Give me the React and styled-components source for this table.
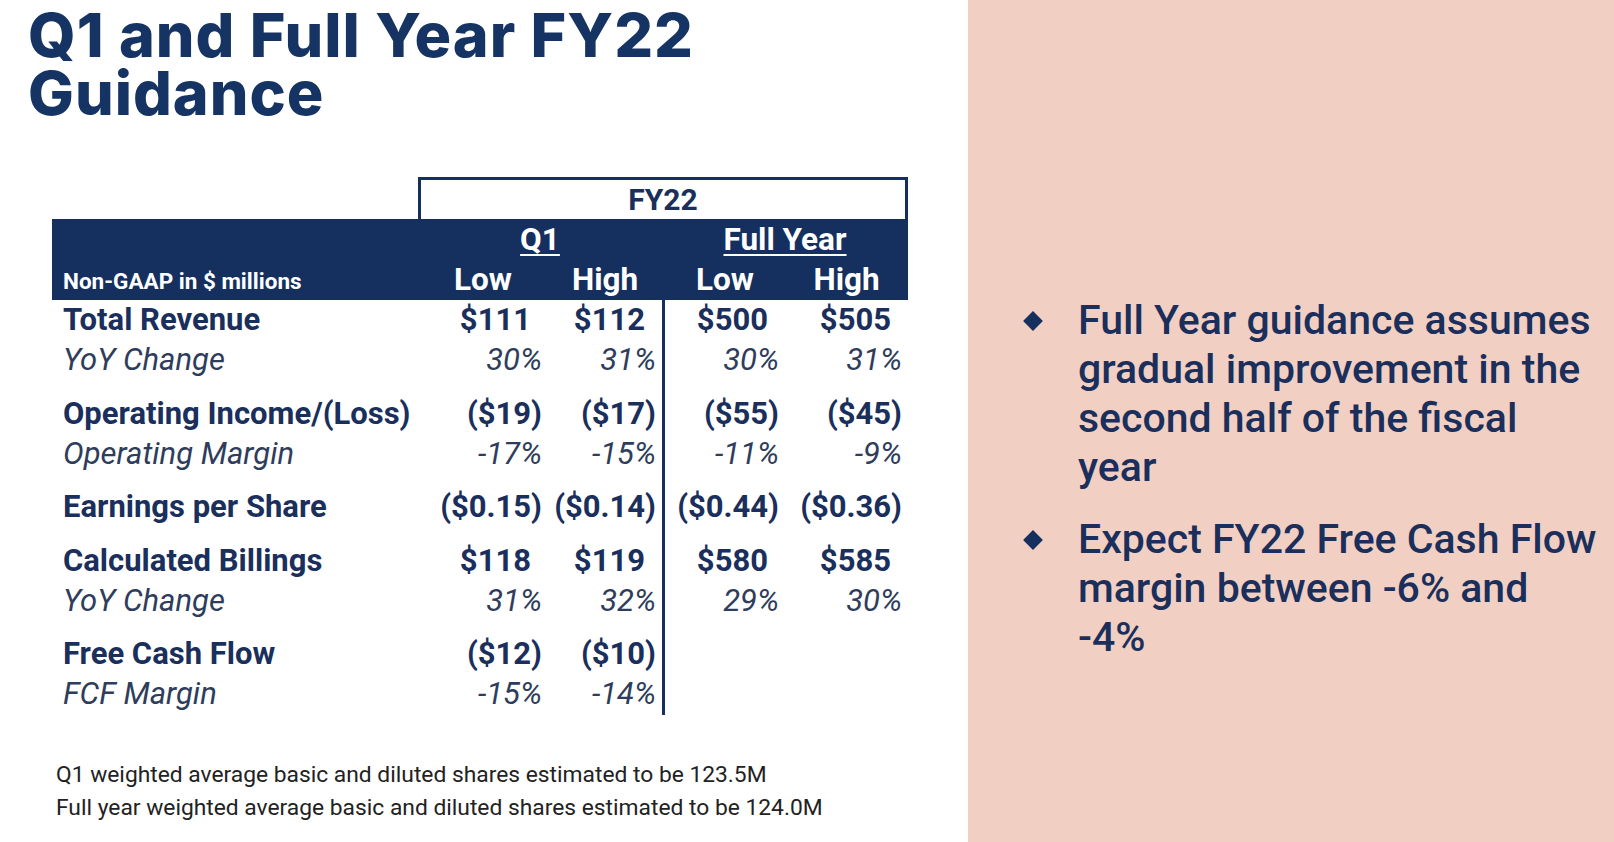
import React from "react";
import styled, { createGlobalStyle } from "styled-components";

const NAVY = "#15305e";
const INK = "#1a2f5b";
const SUB = "#2f3d5c";
const PINK = "#f2cfc3";
const COLS = "366px 130px 114px 3px 120px 123px";

const GlobalStyle = createGlobalStyle`
  html, body {
    margin: 0;
    padding: 0;
    background: #fff;
  }
  body {
    font-family: Roboto, "Liberation Sans", sans-serif;
  }
`;

const Page = styled.div`
  display: grid;
  grid-template-columns: 968px 1fr;
  width: 1614px;
  height: 842px;
  overflow: hidden;
`;

const LeftPane = styled.section`
  display: flex;
  flex-direction: column;
`;

const Title = styled.h1`
  margin: 6px 0 0 28px;
  font-family: Inter, "Open Sans", sans-serif;
  font-weight: 800;
  font-size: 61px;
  line-height: 58px;
  letter-spacing: 1px;
  color: #163463;
`;

const Table = styled.div`
  margin: 55px 0 0 52px;
  width: 856px;
  display: flex;
  flex-direction: column;
`;

const BoxRow = styled.div`
  display: flex;
  padding-left: 366px;
`;

const YearBox = styled.div`
  flex: 1;
  height: 39px;
  border: 3px solid ${NAVY};
  border-bottom: none;
  display: flex;
  align-items: center;
  justify-content: center;
  font-weight: 700;
  font-size: 30px;
  color: ${INK};
`;

const HeadBand = styled.div`
  display: grid;
  grid-template-columns: ${COLS};
  grid-template-rows: 40px 41px;
  background: ${NAVY};
  color: #fff;
`;

const HeadCell = styled.div`
  grid-column: ${(p) => p.$col};
  grid-row: ${(p) => p.$row};
  display: flex;
  align-items: center;
  justify-content: ${(p) => (p.$left ? "flex-start" : "center")};
  padding-left: ${(p) => (p.$left ? "11px" : "0")};
  padding-top: ${(p) => (p.$left ? "2px" : "0")};
  font-weight: 700;
  font-size: ${(p) => (p.$small ? "22.5px" : "31.5px")};
  text-decoration: ${(p) => (p.$under ? "underline" : "none")};
  text-decoration-thickness: 2px;
  text-underline-offset: 4px;
  white-space: nowrap;
`;

const Body = styled.div`
  display: grid;
  grid-template-columns: ${COLS};
  grid-template-rows: 40px 40px 53.5px 40px 53.5px 53.5px 40px 53.5px 40px;
  padding-bottom: 1px;
`;

const Divider = styled.div`
  grid-column: 4;
  grid-row: 1 / -1;
  margin-bottom: -1px;
  background: ${NAVY};
`;

const Cell = styled.div`
  align-self: end;
  height: 40px;
  line-height: 40px;
  white-space: nowrap;
  font-size: 31px;
  font-weight: ${(p) => (p.$sub ? 400 : 700)};
  font-style: ${(p) => (p.$sub ? "italic" : "normal")};
  color: ${(p) => (p.$sub ? SUB : INK)};
  text-align: ${(p) => (p.$label ? "left" : "right")};
  padding-left: ${(p) => (p.$label ? "11px" : "0")};
  padding-right: ${(p) => (p.$label ? "0" : p.$pad ? "17px" : "6px")};
`;

const Notes = styled.div`
  margin: 43px 0 0 56px;
  font-size: 22.8px;
  line-height: 33px;
  color: #222;
`;

const RightPane = styled.section`
  background: ${PINK};
  padding: 296px 14px 0 56px;
`;

const Bullets = styled.ul`
  list-style: none;
  margin: 0;
  padding: 0;
  display: flex;
  flex-direction: column;
  gap: 23px;
`;

const Bullet = styled.li`
  display: grid;
  grid-template-columns: 54px 1fr;
  font-size: 41px;
  font-weight: 500;
  line-height: 49px;
  color: ${INK};
`;

const Diamond = styled.span`
  width: 14px;
  height: 14px;
  margin: 18px 0 0 2px;
  background: ${NAVY};
  transform: rotate(45deg);
`;

const rows = [
  { label: "Total Revenue", vals: ["$111", "$112", "$500", "$505"] },
  { label: "YoY Change", sub: true, vals: ["30%", "31%", "30%", "31%"] },
  { label: "Operating Income/(Loss)", vals: ["($19)", "($17)", "($55)", "($45)"] },
  { label: "Operating Margin", sub: true, vals: ["-17%", "-15%", "-11%", "-9%"] },
  { label: "Earnings per Share", vals: ["($0.15)", "($0.14)", "($0.44)", "($0.36)"] },
  { label: "Calculated Billings", vals: ["$118", "$119", "$580", "$585"] },
  { label: "YoY Change", sub: true, vals: ["31%", "32%", "29%", "30%"] },
  { label: "Free Cash Flow", vals: ["($12)", "($10)", "", ""] },
  { label: "FCF Margin", sub: true, vals: ["-15%", "-14%", "", ""] },
];

const App = () => {
  return (
    <>
      <GlobalStyle />
      <Page>
        <LeftPane>
          <Title>
            Q1 and Full Year FY22
            <br />
            Guidance
          </Title>
          <Table>
            <BoxRow>
              <YearBox>FY22</YearBox>
            </BoxRow>
            <HeadBand>
              <HeadCell $row={1} $col="2 / 4" $under>
                Q1
              </HeadCell>
              <HeadCell $row={1} $col="4 / 7" $under>
                Full Year
              </HeadCell>
              <HeadCell $row={2} $col={1} $left $small>
                Non-GAAP in $ millions
              </HeadCell>
              <HeadCell $row={2} $col={2}>Low</HeadCell>
              <HeadCell $row={2} $col={3}>High</HeadCell>
              <HeadCell $row={2} $col={5}>Low</HeadCell>
              <HeadCell $row={2} $col={6}>High</HeadCell>
            </HeadBand>
            <Body>
              <Divider />
              {rows.map((r, i) => (
                <React.Fragment key={i}>
                  <Cell $label $sub={r.sub}>
                    {r.label}
                  </Cell>
                  {r.vals.map((v, j) => (
                    <Cell key={j} $sub={r.sub} $pad={v.startsWith("$")}>
                      {v}
                    </Cell>
                  ))}
                </React.Fragment>
              ))}
            </Body>
          </Table>
          <Notes>
            Q1 weighted average basic and diluted shares estimated to be 123.5M
            <br />
            Full year weighted average basic and diluted shares estimated to be 124.0M
          </Notes>
        </LeftPane>
        <RightPane>
          <Bullets>
            <Bullet>
              <Diamond />
              <span>
                Full Year guidance assumes gradual improvement in the second
                half of the fiscal year
              </span>
            </Bullet>
            <Bullet>
              <Diamond />
              <span>Expect FY22 Free Cash Flow margin between -6% and -4%</span>
            </Bullet>
          </Bullets>
        </RightPane>
      </Page>
    </>
  );
};

export default App;
